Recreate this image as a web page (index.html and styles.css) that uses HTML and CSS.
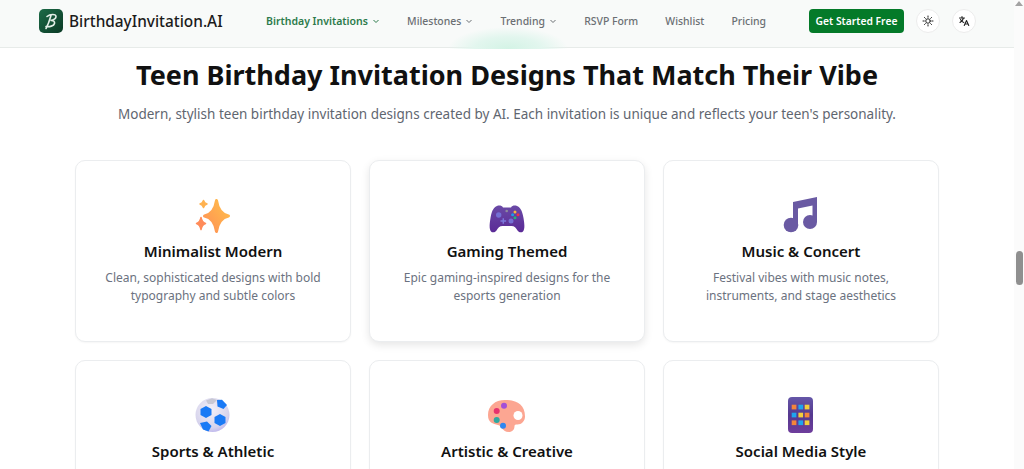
FILE: index.html
```html
<!DOCTYPE html>
<html lang="en">
<head>
<meta charset="utf-8">
<title>BirthdayInvitation.AI</title>
<link rel="stylesheet" href="styles.css">
</head>
<body>
<div class="window">
  <div class="page">
    <header class="topbar">
      <div class="glow"></div>
      <a class="brand">
        <svg class="logo" viewBox="0 0 24 24" width="24" height="24">
          <defs><linearGradient id="lg" x1="0" y1="0" x2="1" y2="1"><stop offset="0" stop-color="#1c6b47"/><stop offset="1" stop-color="#0b3a26"/></linearGradient></defs>
          <rect width="24" height="24" rx="5" fill="url(#lg)"/>
          <path d="M8 7.500C11 5 17 4.500 17 7.500c0 2-3 3.500-5.500 4 3-.3 4.500 1 4 3-.6 2.400-5 3.600-8.500 3M12 6.500C11 10 9.500 15 7 19.500" fill="none" stroke="#e4efe8" stroke-width="1.600" stroke-linecap="round"/>
        </svg>
        <span class="brand-name">BirthdayInvitation.AI</span>
      </a>
      <nav class="nav">
        <a class="nav-item active">Birthday Invitations<svg class="chev" viewBox="0 0 8 8" width="8" height="8"><path d="M1.500 3l2.500 2.500L6.500 3" fill="none" stroke="currentColor" stroke-width="1"/></svg></a>
        <a class="nav-item">Milestones<svg class="chev" viewBox="0 0 8 8" width="8" height="8"><path d="M1.500 3l2.500 2.500L6.500 3" fill="none" stroke="currentColor" stroke-width="1"/></svg></a>
        <a class="nav-item">Trending<svg class="chev" viewBox="0 0 8 8" width="8" height="8"><path d="M1.500 3l2.500 2.500L6.500 3" fill="none" stroke="currentColor" stroke-width="1"/></svg></a>
        <a class="nav-item">RSVP Form</a>
        <a class="nav-item">Wishlist</a>
        <a class="nav-item">Pricing</a>
      </nav>
      <div class="actions">
        <a class="cta">Get Started Free</a>
        <button class="round">
          <svg viewBox="0 0 24 24" width="12" height="12" fill="none" stroke="#222" stroke-width="2" stroke-linecap="round"><circle cx="12" cy="12" r="4.500"/><path d="M12 2v2.500M12 19.500V22M2 12h2.500M19.500 12H22M4.900 4.900l1.800 1.800M17.300 17.300l1.800 1.800M4.900 19.100l1.800-1.800M17.300 6.700l1.800-1.800"/></svg>
        </button>
        <button class="round">
          <svg viewBox="0 0 24 24" width="12" height="12" fill="none" stroke="#222" stroke-width="2.200" stroke-linecap="round" stroke-linejoin="round"><path d="M3 6h10M8 3v3M11 6c-1 4-3.500 7-7 9M5 9c1.500 3 4 5 6.500 6M12.500 21l4.500-10 4.500 10M14 18h6"/></svg>
        </button>
      </div>
    </header>
    <main class="content">
      <h1 class="title">Teen Birthday Invitation Designs That Match Their Vibe</h1>
      <p class="lead">Modern, stylish teen birthday invitation designs created by AI. Each invitation is unique and reflects your teen's personality.</p>
      <section class="grid">
        <article class="card">
          <svg class="icon" viewBox="0 0 40 40" width="40" height="40">
            <defs><linearGradient id="sp" x1="1" y1="0" x2="0" y2="1"><stop offset="0" stop-color="#ffc04a"/><stop offset="1" stop-color="#ff8f55"/></linearGradient></defs>
            <path d="M23.500 5.500Q25.500 19 35.500 21 25.500 23 23.500 36.500 21.500 23 11.500 21 21.500 19 23.500 5.500z" fill="url(#sp)" stroke="url(#sp)" stroke-width="3" stroke-linejoin="round"/>
            <path d="M10.500 5.500Q11.300 8.200 14 9 11.300 9.800 10.500 12.500 9.700 9.800 7 9 9.700 8.200 10.500 5.500z" fill="#ffb24f" stroke="#ffb24f" stroke-width="1.500" stroke-linejoin="round"/>
            <path d="M8 22.500Q9 27.500 12.500 28.500 9 29.500 8 34.500 7 29.500 3.500 28.500 7 27.500 8 22.500z" fill="#ff8c5a" stroke="#ff8c5a" stroke-width="1.500" stroke-linejoin="round"/>
          </svg>
          <h2 class="card-title">Minimalist Modern</h2>
          <p class="card-text">Clean, sophisticated designs with bold typography and subtle colors</p>
        </article>
        <article class="card raised">
          <svg class="icon" viewBox="0 0 40 40" width="40" height="40">
            <defs><linearGradient id="pad" x1="0" y1="0" x2="0" y2="1"><stop offset="0" stop-color="#6a4aa6"/><stop offset="1" stop-color="#5a2a96"/></linearGradient></defs>
            <path d="M10 11c2-1 5-.5 6 1.500h8c1-2 4-2.500 6-1.500 3 1.500 5 3.500 6.500 12 1 6 1.500 11-.5 13.500-1.500 1.500-4 1-5.500-1-1.500-2.500-3-4.500-6-4.500h-9c-3 0-4.500 2-6 4.500-1.500 2-4 2.500-5.500 1C2 34 2.500 29 3.500 23 5 14.500 7 12.500 10 11z" fill="url(#pad)"/>
            <circle cx="11.700" cy="20" r="2.700" fill="#7470d4"/>
            <circle cx="24" cy="26" r="2.500" fill="#7470d4"/>
            <path d="M16.300 23.200v5.600M13.500 26h5.600" stroke="#7b78dc" stroke-width="1.500"/>
            <circle cx="19.700" cy="16" r="1.300" fill="#8f8a9e"/>
            <circle cx="28" cy="17" r="1.500" fill="#f6b73c"/>
            <circle cx="25.600" cy="19.800" r="1.500" fill="#1e9be8"/>
            <circle cx="31" cy="19.800" r="1.500" fill="#ee2f4e"/>
            <circle cx="28" cy="22.700" r="1.500" fill="#20b877"/>
          </svg>
          <h2 class="card-title">Gaming Themed</h2>
          <p class="card-text">Epic gaming-inspired designs for the esports generation</p>
        </article>
        <article class="card">
          <svg class="icon" viewBox="0 0 40 40" width="40" height="40">
            <path d="M12 7 36 2V27H31.500V10.500L17 13.500V30H12z" fill="#6a5aa3"/>
            <circle cx="10" cy="30" r="7.300" fill="#6a5aa3"/>
            <circle cx="29" cy="27" r="7" fill="#6a5aa3"/>
          </svg>
          <h2 class="card-title">Music &amp; Concert</h2>
          <p class="card-text">Festival vibes with music notes, instruments, and stage aesthetics</p>
        </article>
        <article class="card">
          <svg class="icon" viewBox="0 0 40 40" width="40" height="40">
            <defs><radialGradient id="ball" cx=".45" cy=".35" r=".75"><stop offset="0" stop-color="#f3f1f8"/><stop offset=".7" stop-color="#d6d3ec"/><stop offset="1" stop-color="#b2a8ee"/></radialGradient></defs>
            <circle cx="19.500" cy="20" r="17" fill="url(#ball)"/>
            <polygon points="13,5.500 19,3.200 24,5 20,9 15,9" fill="#c8c8d4"/>
            <polygon points="13,11 18.500,14 18.500,20 13,23 7.500,20 7.500,14" fill="#1a7af5"/>
            <polygon points="27,19 32.500,22 32.500,28 27,31 21.500,28 21.500,22" fill="#1a7af5"/>
            <polygon points="24,5 29,4.800 34,10 30.500,14 24.500,11.500" fill="#1a7af5"/>
            <polygon points="7,28 14,26.500 18.500,31 15.500,36.500 10,34.500" fill="#1a7af5"/>
          </svg>
          <h2 class="card-title">Sports &amp; Athletic</h2>
          <p class="card-text">Dynamic designs for team spirit and athletic achievements</p>
        </article>
        <article class="card">
          <svg class="icon" viewBox="0 0 40 40" width="40" height="40">
            <path d="M18 5C8 5 1 11 1 20c0 8 5 8.500 10 10 4 1 4.500 7 10.500 7 4 0 6-2.500 6-6 0-1.500 1-1.500 3-1.500 4 0 7.500-3.500 7.500-8C38 10 30 5 18 5z" fill="#fca692"/>
            <circle cx="31" cy="20.500" r="4.500" fill="#fff"/>
            <circle cx="17" cy="10.700" r="3" fill="#a24fd8"/>
            <circle cx="9.700" cy="16" r="3" fill="#e6326e"/>
            <circle cx="9.700" cy="25" r="3" fill="#2fa8a0"/>
            <circle cx="16" cy="30.700" r="3" fill="#2f86f0"/>
          </svg>
          <h2 class="card-title">Artistic &amp; Creative</h2>
          <p class="card-text">Expressive designs with paint, sketches and bold color</p>
        </article>
        <article class="card">
          <svg class="icon" viewBox="0 0 40 40" width="40" height="40">
            <defs><linearGradient id="tab" x1="0" y1="0" x2="0" y2="1"><stop offset="0" stop-color="#6557a8"/><stop offset=".5" stop-color="#55388f"/><stop offset="1" stop-color="#6e3d9c"/></linearGradient></defs>
            <rect x="7" y="2" width="25" height="36" rx="4" fill="url(#tab)"/>
            <g fill="#f5853a"><rect x="10.700" y="9.700" width="4.700" height="4.700"/><rect x="23.700" y="17.700" width="4.700" height="4.700"/><rect x="10.700" y="25.400" width="4.700" height="4.700"/></g>
            <g fill="#1ea5ee"><rect x="17.400" y="9.700" width="4.700" height="4.700"/><rect x="10.700" y="17.700" width="4.700" height="4.700"/><rect x="17.400" y="25.400" width="4.700" height="4.700"/></g>
            <g fill="#f4ce3a"><rect x="23.700" y="9.700" width="4.700" height="4.700"/><rect x="17.400" y="17.700" width="4.700" height="4.700"/><rect x="23.700" y="25.400" width="4.700" height="4.700"/></g>
          </svg>
          <h2 class="card-title">Social Media Style</h2>
          <p class="card-text">Story-ready designs inspired by the apps teens love</p>
        </article>
      </section>
    </main>
  </div>
  <aside class="scrollbar">
    <span class="arrow"></span>
    <span class="thumb"></span>
  </aside>
</div>
</body>
</html>
```
FILE: styles.css
```css
* { box-sizing: border-box; }
html, body { margin: 0; height: 469px; overflow: hidden; background: #fff; }
body { font-family: "Noto Sans", sans-serif; color: #111; }
.window { display: flex; height: 469px; }
.page { width: 1014px; flex: none; overflow: hidden; }
.topbar {
  position: relative;
  display: flex;
  align-items: center;
  height: 48px;
  padding: 0 39px 5px;
  background: #f8faf9;
  border-bottom: 1px solid #e7ebe9;
}
.glow {
  position: absolute;
  left: 448px;
  top: 27px;
  width: 120px;
  height: 22px;
  background: radial-gradient(ellipse farthest-side at 50% 100%, #d3f3e5 0, #e2f6ee 55%, rgba(248, 250, 249, 0) 100%);
}
.brand { position: relative; display: flex; align-items: center; gap: 6px; width: 227px; flex: none; }
.logo { display: block; flex: none; }
.brand-name { font-size: 15.4px; font-weight: 500; color: #1b1b1b; white-space: nowrap; }
.nav { position: relative; display: flex; align-items: center; gap: 27.2px; flex: none; width: 543px; }
.nav-item { display: flex; align-items: center; gap: 4px; font-size: 10.45px; font-weight: 500; color: #6b6f73; white-space: nowrap; }
.nav-item.active { color: #2c7a4b; font-weight: 600; font-size: 10.5px; }
.chev { display: block; }
.actions { position: relative; display: flex; align-items: center; gap: 12px; flex: none; }
.cta {
  display: flex;
  align-items: center;
  justify-content: center;
  width: 95px;
  height: 24px;
  border-radius: 4px;
  background: #047a29;
  color: #fff;
  font-size: 10.3px;
  font-weight: 600;
  white-space: nowrap;
}
.round {
  display: flex;
  align-items: center;
  justify-content: center;
  width: 24px;
  height: 24px;
  padding: 0;
  border: 1px solid #ececec;
  border-radius: 50%;
  background: #fff;
}
.content { padding: 0 75px; }
.title { margin: 8px 0 0; font-size: 27px; line-height: 38px; font-weight: 700; text-align: center; color: #111; white-space: nowrap; }
.lead { margin: 10px 0 0; font-size: 13.5px; line-height: 20px; text-align: center; color: #5f6670; white-space: nowrap; }
.grid { display: grid; grid-template-columns: repeat(3, 276px); gap: 18px; margin-top: 36px; }
.card {
  display: flex;
  flex-direction: column;
  align-items: center;
  height: 182px;
  padding: 34px 24px 0;
  background: #fff;
  border: 1px solid #ebedef;
  border-radius: 10px;
  box-shadow: 0 1px 2px rgba(0, 0, 0, 0.04);
  text-align: center;
}
.card.raised { box-shadow: 0 3px 8px rgba(0, 0, 0, 0.1); }
.icon { display: block; flex: none; }
.card-title { margin: 5px 0 0; font-size: 15px; line-height: 22px; font-weight: 600; color: #111; }
.card-text { margin: 7px 0 0; font-size: 12px; line-height: 18px; color: #6b7280; }
.scrollbar { position: relative; width: 10px; flex: none; background: #fbfbfb; }
.arrow {
  position: absolute;
  left: 1px;
  top: 1px;
  border-left: 4px solid transparent;
  border-right: 4px solid transparent;
  border-bottom: 5px solid #a3a3a3;
}
.thumb { position: absolute; left: 2px; top: 251px; width: 7px; height: 34px; border-radius: 4px; background: #8f8f8f; }
```
